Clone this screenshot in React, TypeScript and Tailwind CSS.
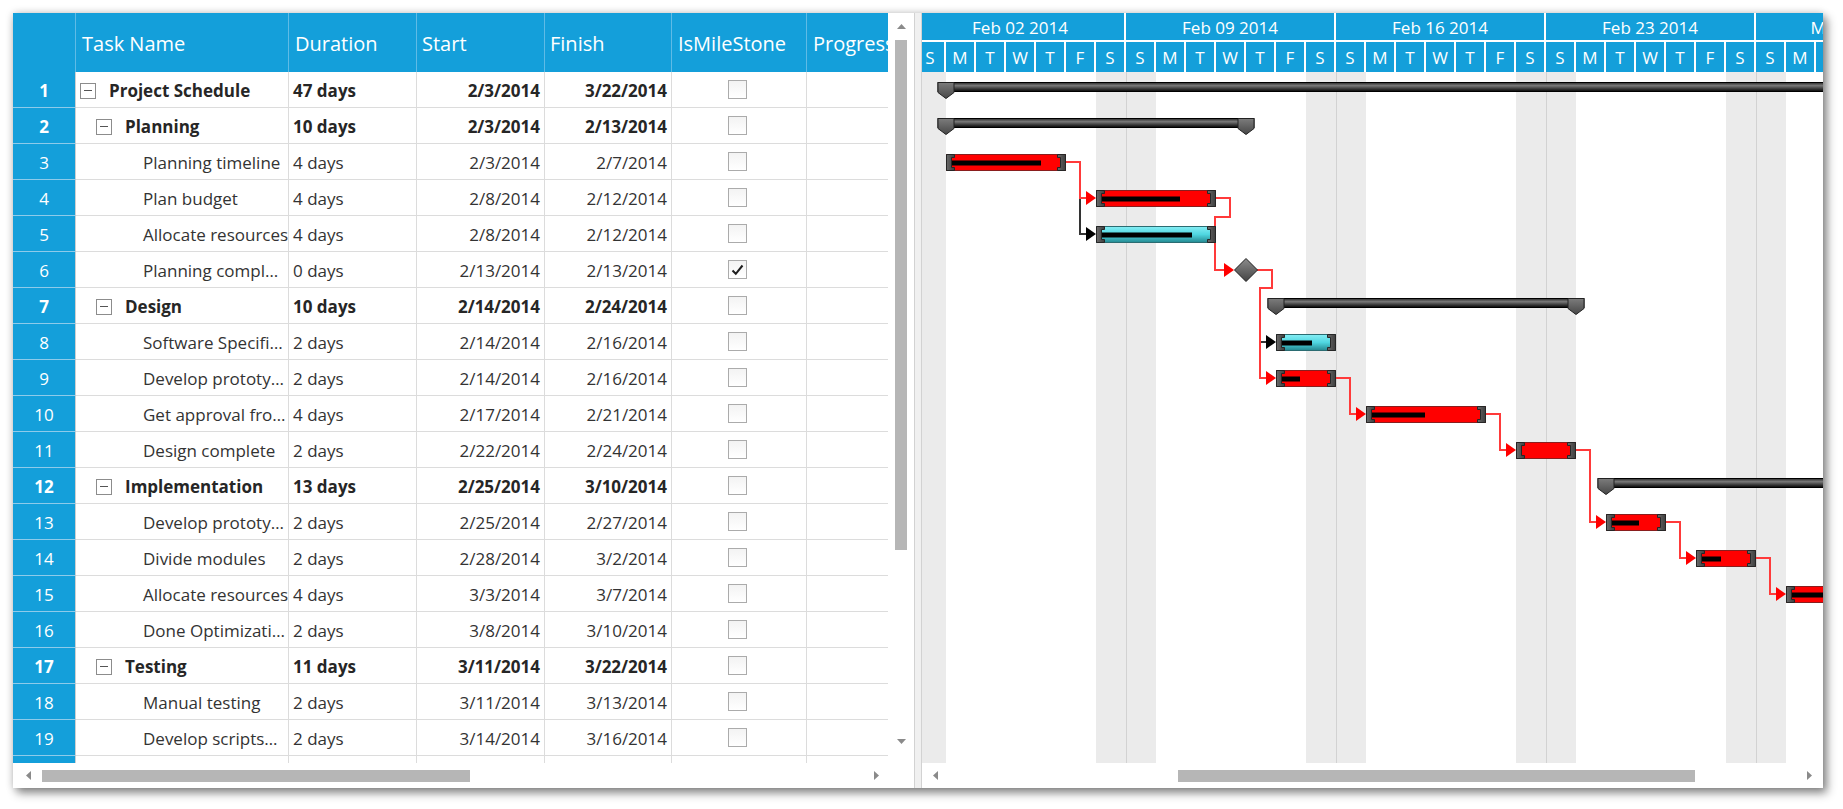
import React from "react";

type Row = {
  id: number;
  name: string;
  level: number;
  summary?: boolean;
  dur: string;
  start: string;
  finish: string;
  ms?: boolean;
};

const rows: Row[] = [
  { id: 1, name: "Project Schedule", level: 0, summary: true, dur: "47 days", start: "2/3/2014", finish: "3/22/2014" },
  { id: 2, name: "Planning", level: 1, summary: true, dur: "10 days", start: "2/3/2014", finish: "2/13/2014" },
  { id: 3, name: "Planning timeline", level: 2, dur: "4 days", start: "2/3/2014", finish: "2/7/2014" },
  { id: 4, name: "Plan budget", level: 2, dur: "4 days", start: "2/8/2014", finish: "2/12/2014" },
  { id: 5, name: "Allocate resources", level: 2, dur: "4 days", start: "2/8/2014", finish: "2/12/2014" },
  { id: 6, name: "Planning compl…", level: 2, dur: "0 days", start: "2/13/2014", finish: "2/13/2014", ms: true },
  { id: 7, name: "Design", level: 1, summary: true, dur: "10 days", start: "2/14/2014", finish: "2/24/2014" },
  { id: 8, name: "Software Specifi…", level: 2, dur: "2 days", start: "2/14/2014", finish: "2/16/2014" },
  { id: 9, name: "Develop prototy…", level: 2, dur: "2 days", start: "2/14/2014", finish: "2/16/2014" },
  { id: 10, name: "Get approval fro…", level: 2, dur: "4 days", start: "2/17/2014", finish: "2/21/2014" },
  { id: 11, name: "Design complete", level: 2, dur: "2 days", start: "2/22/2014", finish: "2/24/2014" },
  { id: 12, name: "Implementation", level: 1, summary: true, dur: "13 days", start: "2/25/2014", finish: "3/10/2014" },
  { id: 13, name: "Develop prototy…", level: 2, dur: "2 days", start: "2/25/2014", finish: "2/27/2014" },
  { id: 14, name: "Divide modules", level: 2, dur: "2 days", start: "2/28/2014", finish: "3/2/2014" },
  { id: 15, name: "Allocate resources", level: 2, dur: "4 days", start: "3/3/2014", finish: "3/7/2014" },
  { id: 16, name: "Done Optimizati…", level: 2, dur: "2 days", start: "3/8/2014", finish: "3/10/2014" },
  { id: 17, name: "Testing", level: 1, summary: true, dur: "11 days", start: "3/11/2014", finish: "3/22/2014" },
  { id: 18, name: "Manual testing", level: 2, dur: "2 days", start: "3/11/2014", finish: "3/13/2014" },
  { id: 19, name: "Develop scripts…", level: 2, dur: "2 days", start: "3/14/2014", finish: "3/16/2014" },
];

// bars in chart coordinates: x = 30px per day from Sun Feb 2, rows 36px
type Bar = { row: number; s: number; e: number; kind: "task" | "cyan" | "sum" | "ms"; p?: number };
const bars: Bar[] = [
  { row: 1, s: 1, e: 48, kind: "sum" },
  { row: 2, s: 1, e: 11, kind: "sum" },
  { row: 3, s: 1, e: 5, kind: "task", p: 91 },
  { row: 4, s: 6, e: 10, kind: "task", p: 80 },
  { row: 5, s: 6, e: 10, kind: "cyan", p: 92 },
  { row: 6, s: 11, e: 11, kind: "ms" },
  { row: 7, s: 12, e: 22, kind: "sum" },
  { row: 8, s: 12, e: 14, kind: "cyan", p: 32 },
  { row: 9, s: 12, e: 14, kind: "task", p: 20 },
  { row: 10, s: 15, e: 19, kind: "task", p: 55 },
  { row: 11, s: 20, e: 22, kind: "task", p: 0 },
  { row: 12, s: 23, e: 36, kind: "sum" },
  { row: 13, s: 23, e: 25, kind: "task", p: 29 },
  { row: 14, s: 26, e: 28, kind: "task", p: 21 },
  { row: 15, s: 29, e: 33, kind: "task", p: 44 },
  { row: 16, s: 34, e: 36, kind: "task", p: 30 },
  { row: 17, s: 37, e: 48, kind: "sum" },
  { row: 18, s: 37, e: 39, kind: "task", p: 30 },
  { row: 19, s: 40, e: 42, kind: "task", p: 20 },
];

const redLinks = [
  { d: "M150,90 H164 V126 H171", tip: [180, 126] },
  { d: "M300,126 H314 V145 H299 V198 H309", tip: [318, 198] },
  { d: "M341,198 H356 V216 H344 V306 H351", tip: [360, 306] },
  { d: "M420,306 H434 V342 H441", tip: [450, 342] },
  { d: "M570,342 H584 V378 H591", tip: [600, 378] },
  { d: "M660,378 H674 V450 H681", tip: [690, 450] },
  { d: "M750,450 H764 V486 H771", tip: [780, 486] },
  { d: "M840,486 H854 V522 H861", tip: [870, 522] },
];
const darkLinks = [
  { d: "M164,126 V162 H171", tip: [180, 162] },
  { d: "M344,270 H351", tip: [360, 270] },
];

const weeks = ["Feb 02 2014", "Feb 09 2014", "Feb 16 2014", "Feb 23 2014", "Mar 02 2014"];
const dayLetters = ["S", "M", "T", "W", "T", "F", "S"];
const days = Array.from({ length: 35 }, (_, i) => i);

const COLS = "grid grid-cols-[63px_213px_128px_128px_127px_135px_120px] w-[914px]";

function Checkbox({ checked }: { checked?: boolean }) {
  return (
    <div className="w-[19px] h-[19px] border border-[#ababab] bg-gradient-to-b from-[#f3f3f3] to-white flex items-center justify-center">
      {checked && (
        <svg width="13" height="12" viewBox="0 0 13 12">
          <path d="M1.5 6.5 L4.8 9.8 L11.5 1.5" stroke="#1e1e1e" strokeWidth="2" fill="none" />
        </svg>
      )}
    </div>
  );
}

function Collapse() {
  return (
    <div className="w-[16px] h-[16px] shrink-0 border border-[#8c8c8c] bg-white flex items-center justify-center">
      <div className="w-[8px] h-px bg-[#555]" />
    </div>
  );
}

function ArrowUp() {
  return (
    <svg width="9" height="5" viewBox="0 0 9 5">
      <path d="M0 5 L4.5 0 L9 5 Z" fill="#8a8a8a" />
    </svg>
  );
}
function ArrowDown() {
  return (
    <svg width="9" height="5" viewBox="0 0 9 5">
      <path d="M0 0 L4.5 5 L9 0 Z" fill="#8a8a8a" />
    </svg>
  );
}
function ArrowLeft() {
  return (
    <svg width="5" height="9" viewBox="0 0 5 9">
      <path d="M5 0 L0 4.5 L5 9 Z" fill="#8a8a8a" />
    </svg>
  );
}
function ArrowRight() {
  return (
    <svg width="5" height="9" viewBox="0 0 5 9">
      <path d="M0 0 L5 4.5 L0 9 Z" fill="#8a8a8a" />
    </svg>
  );
}

function Caps({ x, y, w, h }: { x: number; y: number; w: number; h: number }) {
  const r = x + w;
  return (
    <>
      <path d={`M${x} ${y} H${x + 8} V${y + 3} H${x + 5} V${y + h - 3} H${x + 8} V${y + h} H${x} Z`} fill="url(#cap)" stroke="#262626" strokeWidth="1" />
      <path d={`M${r} ${y} H${r - 8} V${y + 3} H${r - 5} V${y + h - 3} H${r - 8} V${y + h} H${r} Z`} fill="url(#cap)" stroke="#262626" strokeWidth="1" />
    </>
  );
}

function Marker({ cx, y }: { cx: number; y: number }) {
  return (
    <polygon
      points={`${cx - 8},${y} ${cx + 8},${y} ${cx + 8},${y + 10} ${cx},${y + 16} ${cx - 8},${y + 10}`}
      fill="url(#mk)"
      stroke="#222"
      strokeWidth="1"
    />
  );
}

function ChartBars() {
  return (
    <svg className="absolute top-0 left-0" width="1050" height="691">
      <defs>
        <linearGradient id="sum" x1="0" y1="0" x2="0" y2="1">
          <stop offset="0" stopColor="#2a2a2a" />
          <stop offset="0.35" stopColor="#7a7a7a" />
          <stop offset="0.6" stopColor="#4a4a4a" />
          <stop offset="1" stopColor="#050505" />
        </linearGradient>
        <linearGradient id="mk" x1="0" y1="0" x2="0" y2="1">
          <stop offset="0" stopColor="#7c7c7c" />
          <stop offset="1" stopColor="#474747" />
        </linearGradient>
        <linearGradient id="cap" x1="0" y1="0" x2="1" y2="0">
          <stop offset="0" stopColor="#6a6a6a" />
          <stop offset="1" stopColor="#3e3e3e" />
        </linearGradient>
        <linearGradient id="cy" x1="0" y1="0" x2="0" y2="1">
          <stop offset="0" stopColor="#86eef5" />
          <stop offset="0.5" stopColor="#4fd6e0" />
          <stop offset="1" stopColor="#248890" />
        </linearGradient>
        <linearGradient id="dm" x1="0" y1="0" x2="0" y2="1">
          <stop offset="0" stopColor="#8c8c8c" />
          <stop offset="1" stopColor="#444" />
        </linearGradient>
      </defs>

      {darkLinks.map((l, i) => (
        <g key={"d" + i}>
          <path d={l.d} stroke="#333" strokeWidth="2" fill="none" />
          <polygon points={`${l.tip[0]},${l.tip[1]} ${l.tip[0] - 10},${l.tip[1] - 7} ${l.tip[0] - 10},${l.tip[1] + 7}`} fill="#000" />
        </g>
      ))}
      {redLinks.map((l, i) => (
        <g key={"r" + i}>
          <path d={l.d} stroke="#ff3a3a" strokeWidth="2" fill="none" />
          <polygon points={`${l.tip[0]},${l.tip[1]} ${l.tip[0] - 10},${l.tip[1] - 7} ${l.tip[0] - 10},${l.tip[1] + 7}`} fill="#ff0000" />
        </g>
      ))}

      {bars.map((b) => {
        const top = (b.row - 1) * 36;
        const x0 = b.s * 30;
        const x1 = b.e * 30;
        if (b.kind === "sum") {
          return (
            <g key={b.row}>
              <rect x={x0 - 8} y={top + 10.5} width={x1 - x0 + 16} height={9} fill="url(#sum)" stroke="#000" strokeWidth="1" />
              <Marker cx={x0} y={top + 10.5} />
              <Marker cx={x1} y={top + 10.5} />
            </g>
          );
        }
        if (b.kind === "ms") {
          const cy = top + 18;
          return (
            <polygon
              key={b.row}
              points={`${x0},${cy - 11.5} ${x0 + 11.5},${cy} ${x0},${cy + 11.5} ${x0 - 11.5},${cy}`}
              fill="url(#dm)"
              stroke="#1e1e1e"
              strokeWidth="1"
            />
          );
        }
        const y = top + 10.5;
        const w = x1 - x0;
        return (
          <g key={b.row}>
            <rect
              x={x0 + 0.5}
              y={y}
              width={w - 1}
              height={16}
              fill={b.kind === "cyan" ? "url(#cy)" : "#ff0000"}
              stroke={b.kind === "cyan" ? "#2b6c72" : "#8a1e1e"}
              strokeWidth="1"
            />
            {b.p ? <rect x={x0 + 4} y={y + 6} width={b.p} height={5} fill="#000" /> : null}
            <Caps x={x0 + 0.5} y={y} w={w - 1} h={16} />
          </g>
        );
      })}
    </svg>
  );
}

const taskIndent = ["pl-[4px]", "pl-[20px]", "pl-[67px]"];

export default function App() {
  return (
    <div className="w-[1843px] h-[809px] bg-white pt-[13px] pl-[13px] font-['Open_Sans',sans-serif] text-[#333]">
      <div className="w-[1810px] h-[775px] flex bg-white overflow-hidden shadow-[4px_5px_9px_rgba(0,0,0,0.45),0_0_8px_rgba(0,0,0,0.18)]">
        {/* grid side */}
        <div className="w-[901px] h-full flex flex-col">
          <div className="flex h-[750px]">
            <div className="w-[875px] h-full overflow-hidden">
              <div className={`${COLS} h-[59px] bg-[#149fda] text-white text-[20px]`}>
                <div className="border-r border-[#5fbbe6]" />
                <div className="flex items-center pt-[3px] pl-[6px] border-r border-[#5fbbe6]">Task Name</div>
                <div className="flex items-center pt-[3px] pl-[6px] border-r border-[#5fbbe6]">Duration</div>
                <div className="flex items-center pt-[3px] pl-[5px] border-r border-[#5fbbe6]">Start</div>
                <div className="flex items-center pt-[3px] pl-[5px] border-r border-[#5fbbe6]">Finish</div>
                <div className="flex items-center pt-[3px] pl-[6px] border-r border-[#5fbbe6]">IsMileStone</div>
                <div className="flex items-center pt-[3px] pl-[6px] whitespace-nowrap">Progress</div>
              </div>
              <div className="h-[691px] overflow-hidden">
                {rows.map((r) => (
                  <div key={r.id} className={`${COLS} h-[36px] text-[17px] ${r.summary ? "font-bold text-[#262626]" : ""}`}>
                    <div className="bg-[#149fda] text-white flex items-center justify-center pt-[2px] border-b border-[#8ecbea] border-r border-r-[#cfcfcf]">
                      {r.id}
                    </div>
                    <div className={`flex items-center pt-[2px] border-b border-r border-[#dcdcdc] whitespace-nowrap overflow-hidden ${taskIndent[r.level]}`}>
                      {r.summary && <Collapse />}
                      <span className={r.summary ? "ml-[13px]" : ""}>{r.name}</span>
                    </div>
                    <div className="flex items-center pt-[2px] pl-[4px] border-b border-r border-[#dcdcdc] whitespace-nowrap">{r.dur}</div>
                    <div className="flex items-center justify-end pt-[2px] pr-[4px] border-b border-r border-[#dcdcdc]">{r.start}</div>
                    <div className="flex items-center justify-end pt-[2px] pr-[4px] border-b border-r border-[#dcdcdc]">{r.finish}</div>
                    <div className="flex items-center justify-center pr-[3px] border-b border-r border-[#dcdcdc]">
                      <Checkbox checked={r.ms} />
                    </div>
                    <div className="border-b border-[#dcdcdc]" />
                  </div>
                ))}
                {/* partially visible next row */}
                <div className={`${COLS} h-[36px]`}>
                  <div className="bg-[#149fda] border-r border-[#cfcfcf]" />
                  <div className="border-r border-[#dcdcdc]" />
                  <div className="border-r border-[#dcdcdc]" />
                  <div className="border-r border-[#dcdcdc]" />
                  <div className="border-r border-[#dcdcdc]" />
                  <div className="flex items-center justify-center pr-[3px] border-r border-[#dcdcdc]">
                    <Checkbox />
                  </div>
                  <div />
                </div>
              </div>
            </div>
            {/* vertical scrollbar */}
            <div className="w-[26px] h-full flex flex-col items-center">
              <div className="h-[27px] flex items-center justify-center pl-px">
                <ArrowUp />
              </div>
              <div className="w-[12px] h-[510px] bg-[#b6b6b6]" />
              <div className="flex-1" />
              <div className="h-[26px] flex items-start justify-center pl-px pt-[2px]">
                <ArrowDown />
              </div>
            </div>
          </div>
          {/* horizontal scrollbar */}
          <div className="h-[25px] w-[875px] flex items-center">
            <div className="w-[29px] flex justify-center pl-[2px]">
              <ArrowLeft />
            </div>
            <div className="w-[428px] h-[12px] bg-[#b6b6b6]" />
            <div className="flex-1" />
            <div className="w-[24px] flex justify-center">
              <ArrowRight />
            </div>
          </div>
        </div>

        {/* splitter */}
        <div className="w-[8px] h-full border-l border-r border-[#d2d2d2] bg-[#f0f0f0]" />

        {/* gantt side */}
        <div className="flex-1 h-full flex flex-col overflow-hidden">
          <div className="h-[750px] overflow-hidden">
            <div className="ml-[-6px] w-[1050px]">
              <div className="flex h-[29px] bg-[#149fda] text-white text-[17px] border-b-2 border-white">
                {weeks.map((w) => (
                  <div key={w} className="w-[210px] shrink-0 flex items-center justify-center pt-[2px] border-r-2 border-white">
                    {w}
                  </div>
                ))}
              </div>
              <div className="flex h-[30px] bg-[#149fda] text-white text-[17px]">
                {days.map((d) => (
                  <div key={d} className="w-[30px] shrink-0 flex items-center justify-center pt-[2px] border-r-2 border-white">
                    {dayLetters[d % 7]}
                  </div>
                ))}
              </div>
              <div className="relative h-[691px] flex">
                {days.map((d) => (
                  <div
                    key={d}
                    className={`w-[30px] shrink-0 h-full ${d % 7 === 0 || d % 7 === 6 ? "bg-[#ebebeb]" : "bg-white"} ${d % 7 === 0 ? "border-l border-[#d2d2d2]" : ""}`}
                  />
                ))}
                <ChartBars />
              </div>
            </div>
          </div>
          <div className="h-[25px] flex items-center">
            <div className="w-[26px] flex justify-center">
              <ArrowLeft />
            </div>
            <div className="ml-[230px] w-[517px] h-[12px] bg-[#b6b6b6]" />
            <div className="flex-1" />
            <div className="w-[28px] flex justify-center">
              <ArrowRight />
            </div>
          </div>
        </div>
      </div>
    </div>
  );
}
